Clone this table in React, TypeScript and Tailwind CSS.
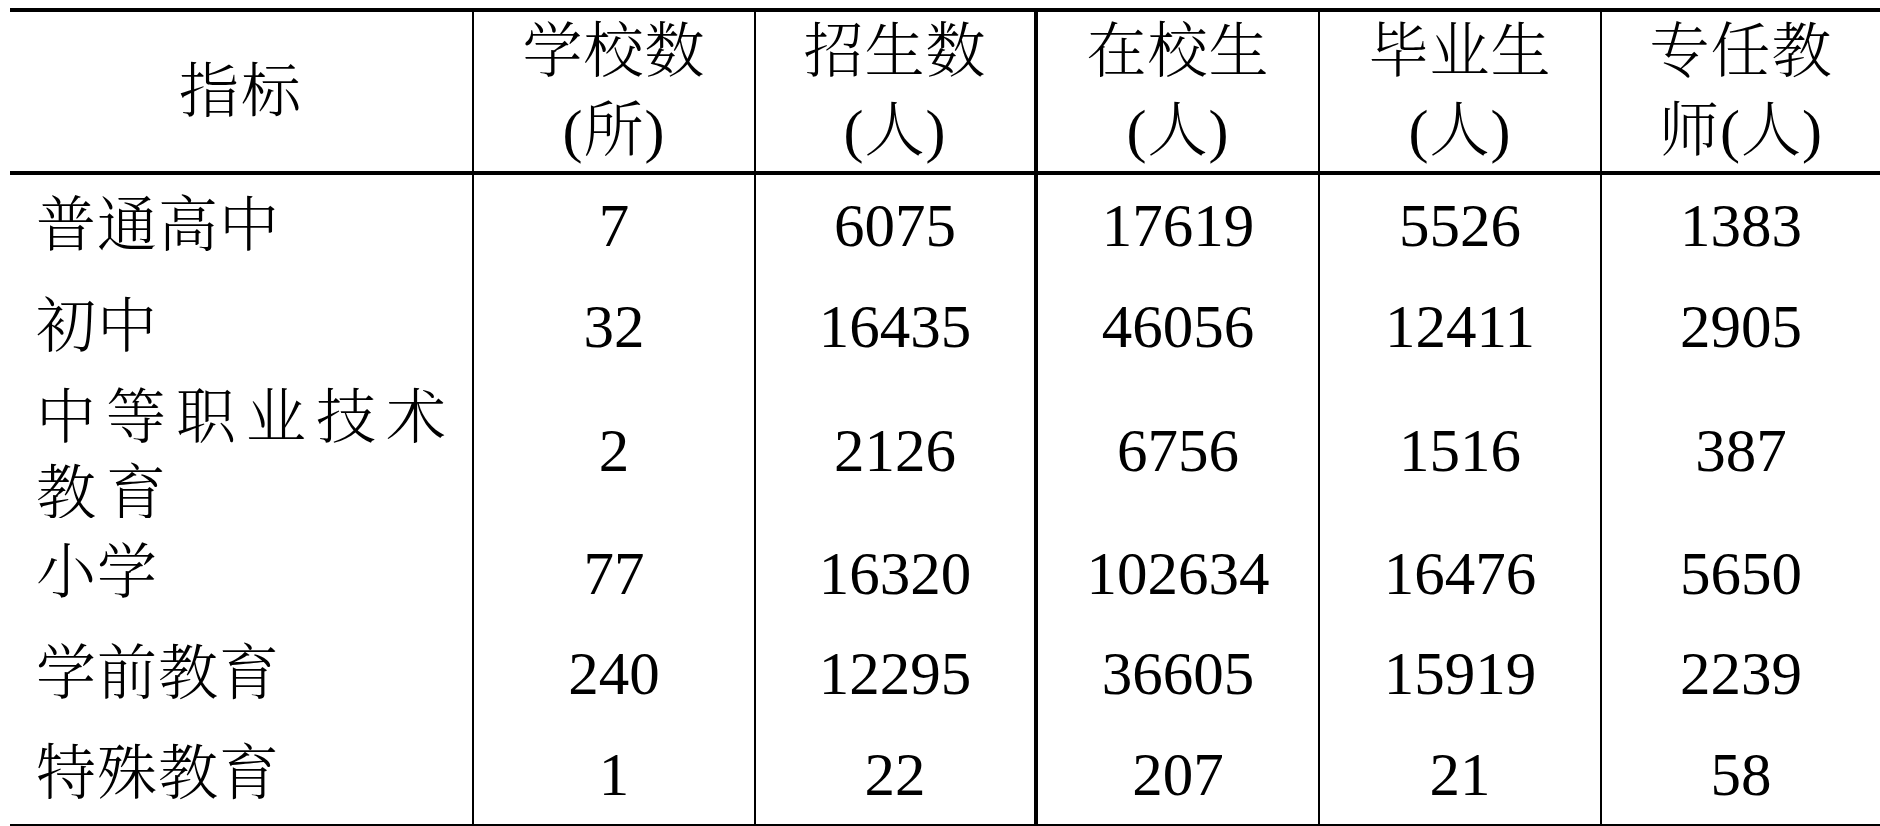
type Row = {
  label: string[]
  values: string[]
  h: string
  wide?: boolean
}

const HEAD: string[][] = [
  ['学校数', '(所)'],
  ['招生数', '(人)'],
  ['在校生', '(人)'],
  ['毕业生', '(人)'],
  ['专任教', '师(人)'],
]

const ROWS: Row[] = [
  { label: ['普通高中'], values: ['7', '6075', '17619', '5526', '1383'], h: 'h-[101px]' },
  { label: ['初中'], values: ['32', '16435', '46056', '12411', '2905'], h: 'h-[101px]' },
  { label: ['中等职业技术', '教育'], values: ['2', '2126', '6756', '1516', '387'], h: 'h-[146px]', wide: true },
  { label: ['小学'], values: ['77', '16320', '102634', '16476', '5650'], h: 'h-[100px]' },
  { label: ['学前教育'], values: ['240', '12295', '36605', '15919', '2239'], h: 'h-[101px]' },
  { label: ['特殊教育'], values: ['1', '22', '207', '21', '58'], h: 'h-[100px]' },
]

// right border per column: thick rule after the third column, none on the last
const COL_BORDER = ['border-r-2', 'border-r-2', 'border-r-4', 'border-r-2', 'border-r-2', '']

const GRID = 'grid grid-cols-[464px_282px_282px_282px_282px_278px]'

export default function App() {
  return (
    <div
      className="w-[1880px] h-[826px] bg-white pt-[8px] pl-[10px] text-black font-light overflow-hidden"
      style={{ fontFamily: '"Liberation Serif", "Noto Serif CJK SC", "Noto Sans CJK SC", serif' }}
    >
      <div className="w-[1870px] border-t-4 border-b-2 border-black">
        {/* header */}
        <div className={`${GRID} h-[163px] border-b-4 border-black`}>
          <div className={`${COL_BORDER[0]} border-black flex items-center justify-center text-[60px] leading-none tracking-[2px]`}>
            指标
          </div>
          {HEAD.map((lines, i) => (
            <div
              key={i}
              className={`${COL_BORDER[i + 1]} border-black flex flex-col items-center justify-center text-[60px] leading-[79px] tracking-[1px]`}
            >
              {lines.map((t) => (
                <span key={t}>{t}</span>
              ))}
            </div>
          ))}
        </div>

        {/* body */}
        {ROWS.map((row) => (
          <div key={row.label[0]} className={`${GRID} ${row.h}`}>
            <div className={`${COL_BORDER[0]} border-black`}>
              {row.wide ? (
                <div className="h-[141px] overflow-hidden pt-[3px] pl-[26px] text-[60px] leading-[76px] tracking-[10px]">
                  {row.label.map((t) => (
                    <div key={t}>{t}</div>
                  ))}
                </div>
              ) : (
                <div className="h-full flex items-center pl-[26px] text-[60px] leading-none tracking-[1px]">
                  {row.label[0]}
                </div>
              )}
            </div>
            {row.values.map((v, i) => (
              <div
                key={i}
                className={`${COL_BORDER[i + 1]} border-black flex items-center justify-center text-[61px] leading-none`}
              >
                {v}
              </div>
            ))}
          </div>
        ))}
      </div>
    </div>
  )
}
